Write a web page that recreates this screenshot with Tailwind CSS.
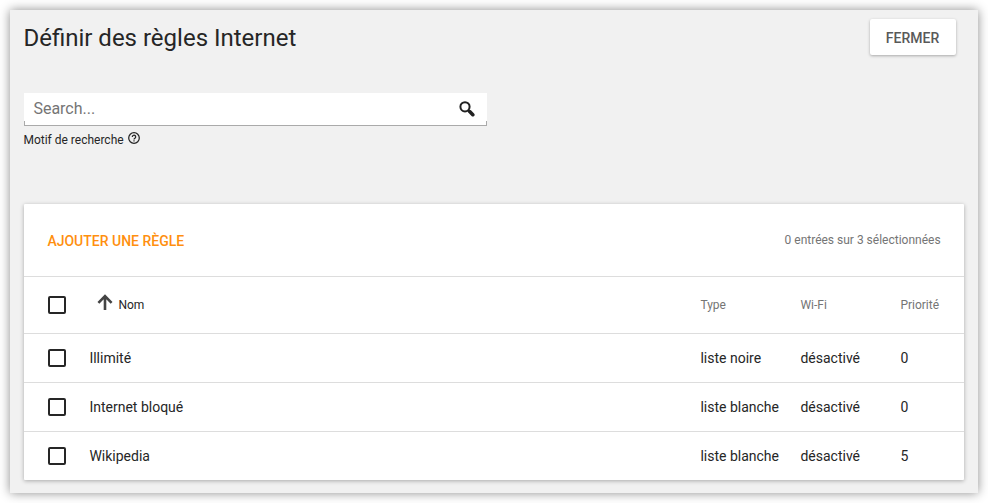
<!DOCTYPE html>
<html lang="fr">
<head>
<meta charset="utf-8">
<title>Définir des règles Internet</title>
<script src="https://cdn.jsdelivr.net/npm/@tailwindcss/browser@4"></script>
</head>
<body class="h-[503px] overflow-hidden bg-white p-[10px] font-[Roboto,sans-serif] text-[#262626] antialiased">
<main class="flex h-[483px] w-[968px] flex-col bg-[#f1f1f1] px-[14px] indent-[-0.6px] shadow-[0_0_10px_rgba(0,0,0,0.45)]">
  <header class="flex items-start justify-between pt-[9px] pr-2">
    <h1 class="pt-[3px] text-[24px] leading-8">Définir des règles Internet</h1>
    <button class="h-9 w-[86px] rounded-[2px] bg-white pt-[2px] pr-px indent-0 text-[14px] font-medium text-[#595959] shadow-[0_1px_3px_rgba(0,0,0,0.3)]">FERMER</button>
  </header>

  <section class="mt-[38px] w-[463px]">
    <div class="flex h-[33px] flex-col bg-white">
      <div class="flex h-[28px] items-center justify-between pr-3 pl-[10px]">
        <input type="text" placeholder="Search..." class="mt-[3px] -ml-[0.6px] h-6 w-[400px] text-[16px] outline-none placeholder:text-[#757575]">
        <svg class="mt-[3px] size-4" viewBox="0 0 16 16" fill="none" stroke="#212121">
          <circle cx="6" cy="5.8" r="4.6" stroke-width="2"/>
          <path d="M9.2 9.2L10.7 10.7" stroke-width="2"/>
          <path d="M10.7 10.6L13.8 13.7" stroke-width="3.6" stroke-linecap="round"/>
        </svg>
      </div>
      <div class="h-[5px] border-x border-b border-[#aaa]"></div>
    </div>
    <div class="mt-[5px] flex h-[18px] items-start">
      <label class="w-[100px] text-[12px] leading-[18px] whitespace-nowrap">Motif de recherche</label>
      <svg class="mt-px ml-1 size-3" viewBox="0 0 12 12" fill="none" stroke="#262626">
        <circle cx="6" cy="6" r="5.3" stroke-width="1.25"/>
        <path d="M4.3 4.9a1.7 1.7 0 1 1 2.6 1.4C6.3 6.7 6 6.9 6 7.6" stroke-width="1.2"/>
        <path d="M6 8.2V9.4" stroke-width="1.2"/>
      </svg>
    </div>
  </section>

  <section class="mt-[55px] h-[276px] rounded-[1px] bg-white shadow-[0_1px_4px_rgba(0,0,0,0.3)]">
    <div class="flex h-[73px] items-center justify-between border-b border-[#ddd] px-6">
      <button class="-ml-[0.6px] pt-[3px] text-[14px] font-medium text-[#ff8f0f]">AJOUTER UNE RÈGLE</button>
      <span class="-mr-[0.6px] text-[12px] text-[#757575]">0 entrées sur 3 sélectionnées</span>
    </div>
    <div class="grid h-[57px] grid-cols-[42px_611px_100px_100px_1fr] items-center border-b border-[#ddd] pl-6 text-[12px] text-[#757575]">
      <span class="size-[18px] rounded-[2px] border-2 border-[#262626]"></span>
      <span class="flex items-center pl-[7px] text-[#262626]">
        <svg class="mr-[6px] -mt-[7px] h-4 w-4" viewBox="0 0 16 16" fill="none" stroke="#444" stroke-width="2.6"><path d="M8 16V2M1.4 8.8L8 2.2L14.6 8.8"/></svg>
        Nom
      </span>
      <span>Type</span><span>Wi-Fi</span><span>Priorité</span>
    </div>
    <div class="grid h-[49px] grid-cols-[42px_611px_100px_100px_1fr] items-center border-b border-[#ddd] pl-6 text-[14px]">
      <span class="size-[18px] rounded-[2px] border-2 border-[#262626]"></span>
      <span>Illimité</span><span>liste noire</span><span>désactivé</span><span>0</span>
    </div>
    <div class="grid h-[49px] grid-cols-[42px_611px_100px_100px_1fr] items-center border-b border-[#ddd] pl-6 text-[14px]">
      <span class="size-[18px] rounded-[2px] border-2 border-[#262626]"></span>
      <span>Internet bloqué</span><span>liste blanche</span><span>désactivé</span><span>0</span>
    </div>
    <div class="grid h-12 grid-cols-[42px_611px_100px_100px_1fr] items-center pl-6 text-[14px]">
      <span class="size-[18px] rounded-[2px] border-2 border-[#262626]"></span>
      <span>Wikipedia</span><span>liste blanche</span><span>désactivé</span><span>5</span>
    </div>
  </section>
</main>
</body>
</html>
